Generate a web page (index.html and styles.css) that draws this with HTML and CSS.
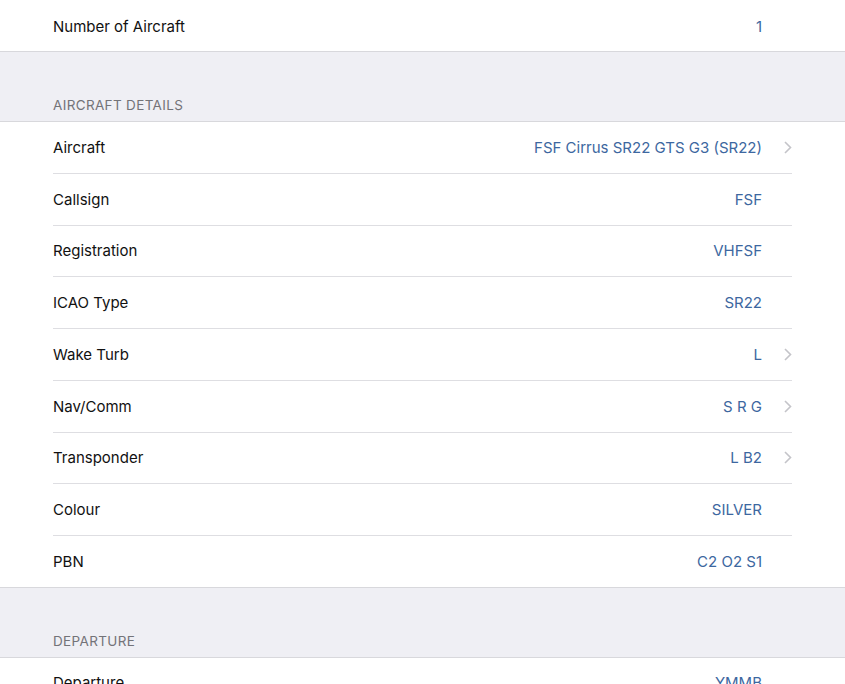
FILE: index.html
```html
<!DOCTYPE html>
<html lang="en">
<head>
    <meta charset="UTF-8">
    <meta name="viewport" content="width=device-width, initial-scale=1.0">
    <title>Flight Plan</title>
    <link rel="stylesheet" href="styles.css">
</head>
<body>

<div class="group first">
    <div class="row">
        <span class="label">Number of Aircraft</span>
        <span class="value">1</span>
        <span class="accessory"></span>
    </div>
</div>

<div class="section-header">AIRCRAFT DETAILS</div>
<div class="group">
    <div class="row">
        <span class="label">Aircraft</span>
        <span class="value">FSF Cirrus SR22 GTS G3 (SR22)</span>
        <span class="accessory"><svg class="chevron" viewBox="0 0 8 13"><path d="M1 1l5.5 5.5L1 12"/></svg></span>
    </div>
    <div class="row">
        <span class="label">Callsign</span>
        <span class="value">FSF</span>
        <span class="accessory"></span>
    </div>
    <div class="row">
        <span class="label">Registration</span>
        <span class="value">VHFSF</span>
        <span class="accessory"></span>
    </div>
    <div class="row">
        <span class="label">ICAO Type</span>
        <span class="value">SR22</span>
        <span class="accessory"></span>
    </div>
    <div class="row">
        <span class="label">Wake Turb</span>
        <span class="value">L</span>
        <span class="accessory"><svg class="chevron" viewBox="0 0 8 13"><path d="M1 1l5.5 5.5L1 12"/></svg></span>
    </div>
    <div class="row">
        <span class="label">Nav/Comm</span>
        <span class="value">S R G</span>
        <span class="accessory"><svg class="chevron" viewBox="0 0 8 13"><path d="M1 1l5.5 5.5L1 12"/></svg></span>
    </div>
    <div class="row">
        <span class="label">Transponder</span>
        <span class="value">L B2</span>
        <span class="accessory"><svg class="chevron" viewBox="0 0 8 13"><path d="M1 1l5.5 5.5L1 12"/></svg></span>
    </div>
    <div class="row">
        <span class="label">Colour</span>
        <span class="value">SILVER</span>
        <span class="accessory"></span>
    </div>
    <div class="row">
        <span class="label">PBN</span>
        <span class="value">C2 O2 S1</span>
        <span class="accessory"></span>
    </div>
</div>

<div class="section-header">DEPARTURE</div>
<div class="group">
    <div class="row">
        <span class="label">Departure</span>
        <span class="value">YMMB</span>
        <span class="accessory"></span>
    </div>
</div>

</body>
</html>
```

FILE: styles.css
```css
body {
    margin: 0;
    background-color: #efeff4;
    font-family: Inter, "Liberation Sans", Arial, sans-serif;
    overflow: hidden;
}

.group {
    background-color: #fff;
    border-top: 1px solid #d8d8dc;
    border-bottom: 1px solid #d8d8dc;
}

.group.first {
    border-top: none;
}

.row {
    display: flex;
    align-items: center;
    height: 50.75px;
    margin: 0 53px;
    border-bottom: 1px solid #dedee2;
}

.row:last-child {
    border-bottom: none;
    height: 50.5px;
}

.first .row:last-child {
    height: 51px;
    padding-top: 1px;
    box-sizing: border-box;
}

.label {
    flex: 1;
    font-size: 15px;
    color: #111;
}

.value {
    font-size: 15px;
    color: #3d67a0;
}

.accessory {
    width: 30px;
    display: flex;
    justify-content: flex-end;
}

.chevron {
    width: 8px;
    height: 13px;
    fill: none;
    stroke: #c4c4c9;
    stroke-width: 1.6;
}

.section-header {
    height: 69px;
    display: flex;
    align-items: flex-end;
    padding: 0 0 8px 53px;
    box-sizing: border-box;
    font-size: 13.5px;
    color: #737378;
    letter-spacing: 0.35px;
}
```
